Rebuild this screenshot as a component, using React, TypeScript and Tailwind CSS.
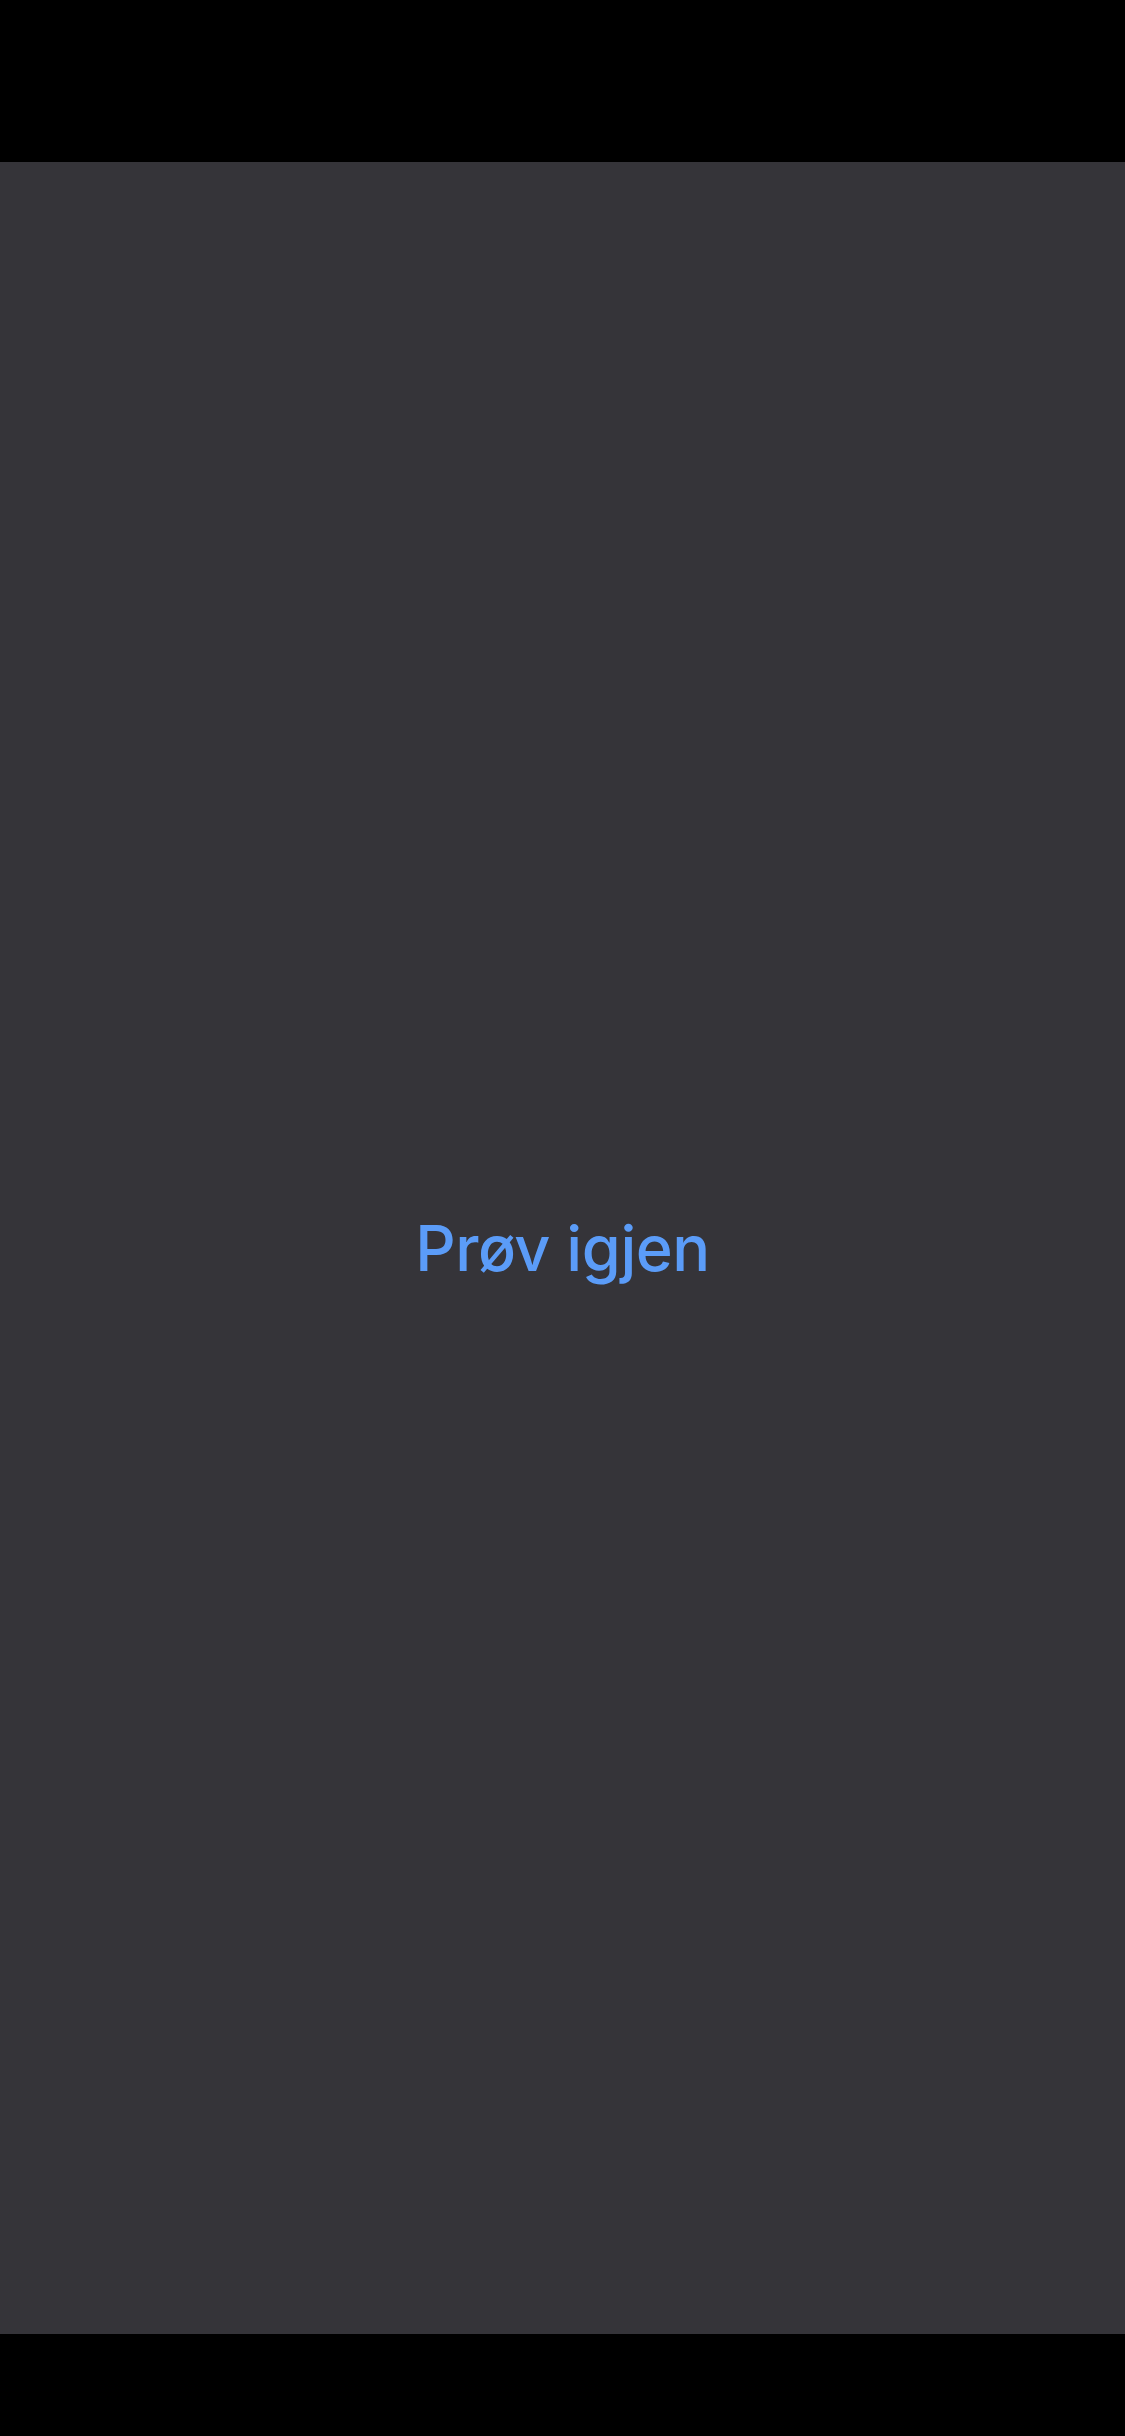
export default function App() {
  return (
    <div className="flex h-[2436px] w-full flex-col bg-black">
      <div className="h-[162px] shrink-0 bg-black" />
      <div className="flex flex-1 items-center justify-center bg-[#353439]">
        <button
          type="button"
          className="font-['Inter',sans-serif] text-[63px] font-medium leading-none tracking-[-0.5px] text-[#5b9cf8]"
        >
          Prøv igjen
        </button>
      </div>
      <div className="h-[102px] shrink-0 bg-black" />
    </div>
  );
}
